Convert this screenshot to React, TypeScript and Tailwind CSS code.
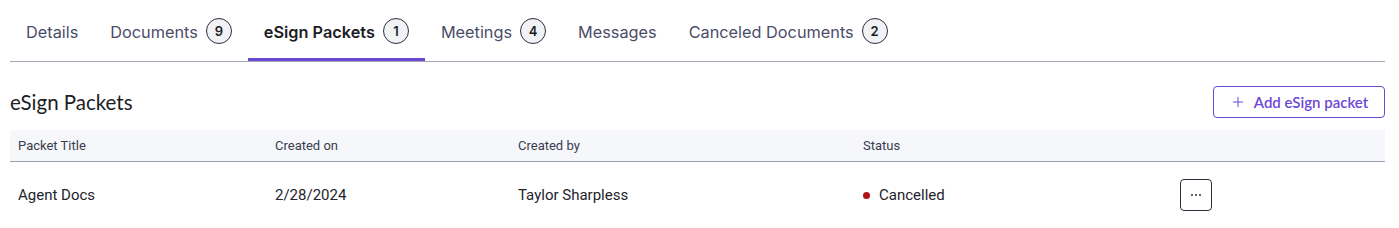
import { Plus } from 'lucide-react'

const tabs = [
  { label: 'Details' },
  { label: 'Documents', count: 9 },
  { label: 'eSign Packets', count: 1, active: true },
  { label: 'Meetings', count: 4 },
  { label: 'Messages' },
  { label: 'Canceled Documents', count: 2 },
]

export default function App() {
  return (
    <div className="w-[1399px] h-[228px] bg-white pl-[10px] pr-[14px] font-['Inter',sans-serif]">
      <div className="flex border-b border-[#a3a7b3] h-[62px] pt-[18px]">
        {tabs.map((t) => (
          <div
            key={t.label}
            className={`flex items-start gap-[8px] px-4 text-[16.3px] leading-[28px] border-b-[3px] ${
              t.active
                ? 'border-[#6b48d4] text-[#1d1d24] font-semibold'
                : 'border-transparent text-[#4b4d68]'
            }`}
          >
            <span>{t.label}</span>
            {t.count !== undefined && (
              <span className="w-[26px] h-[26px] rounded-full border-[1.5px] border-[#2c2e3c] bg-[#f1f2f6] text-[#1d1d24] text-[13px] font-semibold flex items-center justify-center leading-none">
                {t.count}
              </span>
            )}
          </div>
        ))}
      </div>

      <div className="flex items-center justify-between mt-[24px] h-[32px]">
        <h2 className="font-['Lato',sans-serif] text-[20.5px] text-[#1d1d24]">eSign Packets</h2>
        <button className="flex items-center gap-[8px] h-[32px] w-[172px] justify-center border border-[#6b48d4] rounded-[4px] text-[#6b48d4] text-[15px] font-semibold font-['Lato',sans-serif]">
          <Plus size={16} strokeWidth={1.5} />
          Add eSign packet
        </button>
      </div>

      <div className="mt-[12px] text-[#23242c] font-['Roboto',sans-serif]">
        <div className="grid grid-cols-[257px_243px_345px_317px_1fr] h-[32px] items-center bg-[#f6f7fb] border-b border-[#9aa0b4] text-[13px] text-[#3a3c4e]">
          <div className="px-2">Packet Title</div>
          <div className="px-2">Created on</div>
          <div className="px-2">Created by</div>
          <div className="px-2">Status</div>
          <div />
        </div>
        <div className="grid grid-cols-[257px_243px_345px_317px_1fr] h-[66px] items-center text-[15px]">
          <div className="px-2">Agent Docs</div>
          <div className="px-2">2/28/2024</div>
          <div className="px-2">Taylor Sharpless</div>
          <div className="px-2 flex items-center gap-[9px]">
            <span className="w-[7px] h-[7px] rounded-full bg-[#b01414]" />
            Cancelled
          </div>
          <div className="px-2">
            <button className="w-[32px] h-[32px] border border-[#2c2e3c] rounded-[4px] flex items-center justify-center gap-[2px]">
              <span className="w-[2px] h-[2px] rounded-full bg-[#2c2e3c]" />
              <span className="w-[2px] h-[2px] rounded-full bg-[#2c2e3c]" />
              <span className="w-[2px] h-[2px] rounded-full bg-[#2c2e3c]" />
            </button>
          </div>
        </div>
      </div>
    </div>
  )
}
